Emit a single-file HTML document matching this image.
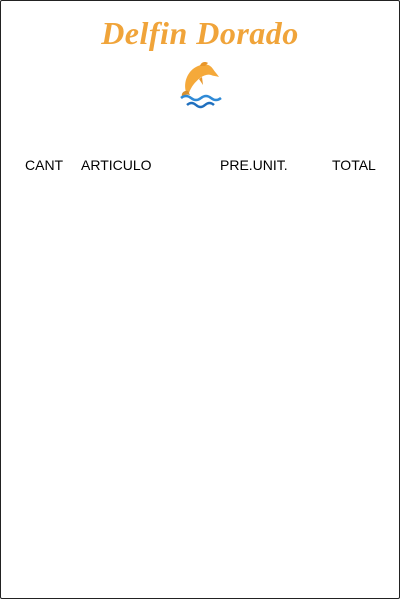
<!DOCTYPE html><html><head><style>
body{margin:0;width:400px;height:599px;background:#fff;overflow:hidden}
.f{position:absolute;left:0;top:0;width:398px;height:597px;border:1px solid #222;border-radius:2px}
.t{position:absolute;top:15px;left:0;width:400px;text-align:center;font:italic bold 32px "Liberation Serif",serif;color:#f0a43a;letter-spacing:0.5px}
.h{position:absolute;top:157px;font:14px "Liberation Sans",sans-serif;color:#000}
</style></head><body><div class="f"></div>
<div class="t">Delfin Dorado</div>
<svg style="position:absolute;left:178px;top:56px" width="46" height="54" viewBox="0 0 46 54">
<path d="M8 36 C5 26 10 14 20 10 C26 7 32 8 35 13 C37 16 39 18 41 21 C38 20 35 20 33 19 C30 18 26 19 22 22 C17 26 13 31 11 37 Z" fill="#f5a93a"/>
<path d="M22 10 C23 6 27 5 30 7 L27 10Z" fill="#e8962a"/>
<path d="M10 35 C5 34 3 38 4 41 C6 39 9 38 12 39Z" fill="#d8902e"/>
<path d="M21 23 L25 29 L24 21Z" fill="#e8962a"/>
<path d="M3 42 q5-4 10 0 t10 0 t10 0 t10 0" stroke="#2f8ad6" stroke-width="2.5" fill="none"/>
<path d="M9 49 q4.5-4 9 0 t9 0 t9 0" stroke="#1f6fbe" stroke-width="2.5" fill="none"/>
</svg>
<div class="h" style="left:25px">CANT</div>
<div class="h" style="left:81px">ARTICULO</div>
<div class="h" style="left:220px">PRE.UNIT.</div>
<div class="h" style="left:332px">TOTAL</div>
</body></html>
